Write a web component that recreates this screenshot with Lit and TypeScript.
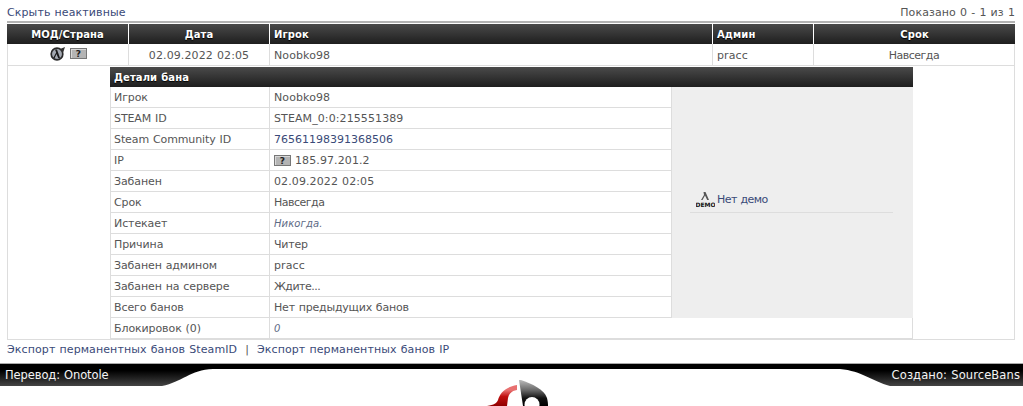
import { LitElement, html, css } from "lit";
import { customElement } from "lit/decorators.js";

const flag = html`<svg class="flag" width="17" height="11" viewBox="0 0 17 11"><rect x=".5" y=".5" width="16" height="10" fill="#b4b4b4" stroke="#777"/><path d="M1 1h15v1H2v8H1z" fill="#d8d8d8"/><text x="8.5" y="8.8" text-anchor="middle" font-size="9" font-weight="700" font-family="DejaVu Sans" fill="#222">?</text></svg>`;
const cy = (s: string) => html`<span class="cy">${s}</span>`;
const tight = (s: string) => html`<span class="tight">${s}</span>`;

const rows: [string, unknown][] = [
  ["Игрок", "Noobko98"],
  ["STEAM ID", "STEAM_0:0:215551389"],
  ["Steam Community ID", html`<a class="num">76561198391368506</a>`],
  ["IP", html`${flag}<span>185.97.201.2</span>`],
  ["Забанен", "02.09.2022 02:05"],
  ["Срок", tight("Навсегда")],
  ["Истекает", html`<i class="never">Никогда.</i>`],
  ["Причина", cy("Читер")],
  ["Забанен админом", "pracc"],
  ["Забанен на сервере", tight("Ждите...")],
  ["Всего банов", cy("Нет предыдущих банов")],
];

@customElement("app-root")
export class AppRoot extends LitElement {
  static styles = css`
    :host { display: block; width: 1023px; height: 406px; overflow: hidden; background: #fff; font: 11px/14px "DejaVu Sans", Verdana, sans-serif; color: #555; letter-spacing: .1px; word-spacing: .5px; }
    a { color: #3a4a78; }
    .num { letter-spacing: 0; }
    .cy { letter-spacing: -.2px; }
    .tight { letter-spacing: -.5px; }
    .page { padding: 0 8px 0 7px; }
    .top { display: flex; justify-content: space-between; align-items: center; padding-top: 4px; box-sizing: border-box; border-bottom: 2px solid #b3b3b3; height: 23px; }
    .cols { display: grid; grid-template-columns: 122px 141px 443px 101px 201px; }
    .head { margin-top: 1px; height: 20px; }
    .head > div { background: linear-gradient(#4a4a4a, #1e1e1e); color: #fff; font-weight: 700; font-size: 10px; display: flex; align-items: center; padding: 1px 4px 0; border-right: 1px solid #fff; text-shadow: 0 1px 1px #000; }
    .head > div:last-child { border-right: 0; }
    .c { justify-content: center; text-align: center; }
    .row { border-bottom: 1px solid #ddd; box-sizing: border-box; height: 22px; }
    .row > div { display: flex; align-items: center; padding: 2px 4px 0; border-right: 1px solid #ddd; }
    .row > div:first-child { border-left: 1px solid #ddd; gap: 4px; padding: 0 3px 3px 4px; }
    .outer { border: 1px solid #ddd; border-top: 0; padding: 1px 101px 0 102px; height: 274px; box-sizing: border-box; }
    .details { display: grid; grid-template-columns: 160px 402px 241px; grid-template-rows: 20px; grid-auto-rows: 21px; }
    .dh { grid-column: 1 / -1; background: linear-gradient(#4a4a4a, #1e1e1e); color: #fff; font-weight: 700; font-size: 10px; display: flex; align-items: center; padding: 1px 4px 0; text-shadow: 0 1px 1px #000; }
    .cell { display: flex; align-items: center; gap: 4px; padding: 1px 4px 0; border-bottom: 1px solid #ddd; border-right: 1px solid #ddd; white-space: pre; }
    .cell.l { border-left: 1px solid #ddd; padding-left: 3px; letter-spacing: -.1px; }
    .never { color: #5d6a85; font-size: 10px; }
    .side { grid-column: 3; grid-row: 2 / span 11; background: #eee; display: flex; align-items: center; padding: 0 20px 0 18px; }
    .demo { display: flex; align-items: flex-start; gap: 2px; flex: 1; border-bottom: 1px solid #ddd; height: 21px; padding-left: 6px; box-sizing: border-box; letter-spacing: -.5px; }
    .demo a { margin-top: 1px; }
    .wide { grid-column: 2 / -1; }
    .exp { display: flex; align-items: center; gap: 8px; padding-bottom: 4px; box-sizing: border-box; height: 23px; white-space: pre; }
    .foot { position: relative; height: 23px; background: #fff; border-top: 1px solid #aaa; box-sizing: border-box; }
    .foot svg.bg { display: block; }
    .t { position: absolute; top: 4px; color: #f4f4f4; font-size: 11.5px; }
    .l1 { left: 5px; letter-spacing: -.1px; } .r1 { right: 3px; }
    .logo { position: absolute; left: 480px; top: 12px; }
    .flag { flex: none; }
  `;

  render() {
    return html`
      <div class="page">
        <div class="top"><a>Скрыть неактивные</a><span>Показано 0 - 1 из 1</span></div>
        <div class="cols head">
          <div class="c">МОД/Страна</div><div class="c">Дата</div><div>Игрок</div><div>Админ</div><div class="c">Срок</div>
        </div>
        <div class="cols row">
          <div class="c">
            <svg width="16" height="15" viewBox="0 0 16 15"><circle cx="7" cy="8" r="5.8" fill="#a4a9b2" stroke="#2a2a2a" stroke-width="1.7"/><path d="M5 3.5h2L10 12H8.2L6.5 8 4.7 12H3.2l3-5.5z" fill="#1a1a1a"/><path d="M10 3l5-2-2 6z" fill="#333"/></svg>
            ${flag}
          </div>
          <div class="c">02.09.2022 02:05</div><div>Noobko98</div><div>pracc</div><div class="c">${tight("Навсегда")}</div>
        </div>
        <div class="outer">
          <div class="details">
            <div class="dh">Детали бана</div>
            ${rows.map(([k, v]) => html`<div class="cell l">${k}</div><div class="cell">${v}</div>`)}
            <div class="side">
              <div class="demo">
                <svg width="19" height="16" viewBox="0 0 19 16"><path d="M7.5 0h2L13 8h-1.8L9 3.5 6.5 8H5l3-5z" fill="#555"/><text x="9.5" y="15" text-anchor="middle" font-size="6" font-weight="700" letter-spacing="0" font-family="DejaVu Sans" fill="#111">DEMO</text></svg>
                <a>Нет демо</a>
              </div>
            </div>
            <div class="cell l">Блокировок (0)</div>
            <div class="cell wide"><i class="never">0</i></div>
          </div>
        </div>
        <div class="exp"><a>Экспорт перманентных банов SteamID</a><span>|</span><a>Экспорт перманентных банов IP</a></div>
      </div>
      <div class="foot">
        <svg class="bg" width="1023" height="22" viewBox="0 0 1023 22">
          <defs><linearGradient id="g" x1="0" y1="0" x2="0" y2="1"><stop offset="0" stop-color="#000"/><stop offset=".3" stop-color="#000"/><stop offset="1" stop-color="#444"/></linearGradient></defs>
          <path d="M0 0H1023V22H890C872 17 862 7 840 5H213C190 6 182 18 162 22H0Z" fill="url(#g)"/>
        </svg>
        <span class="t l1">Перевод: Onotole</span>
        <span class="t r1">Создано: SourceBans</span>
        <svg class="logo" width="70" height="30" viewBox="0 0 70 30">
          <defs>
            <linearGradient id="r" x1="0" y1="0" x2="0" y2="1"><stop offset=".25" stop-color="#e87070"/><stop offset=".55" stop-color="#c01010"/><stop offset="1" stop-color="#900000"/></linearGradient>
            <linearGradient id="k" x1="0" y1="0" x2="0" y2="1"><stop offset="0" stop-color="#bbb"/><stop offset=".4" stop-color="#666"/><stop offset=".7" stop-color="#111"/><stop offset="1" stop-color="#000"/></linearGradient>
          </defs>
          <path d="M7 30C14 29 17 27 18 24C20 17 25 11 37 9V14C31 15 29 18 28 22L27 30Z" fill="url(#r)"/>
          <path d="M39 4L41 4C52 8 64 13 67 22C68 26 68 28 68 30H43Z" fill="url(#k)"/>
          <circle cx="52" cy="28.5" r="7.5" fill="#fff"/>
        </svg>
      </div>
    `;
  }
}
